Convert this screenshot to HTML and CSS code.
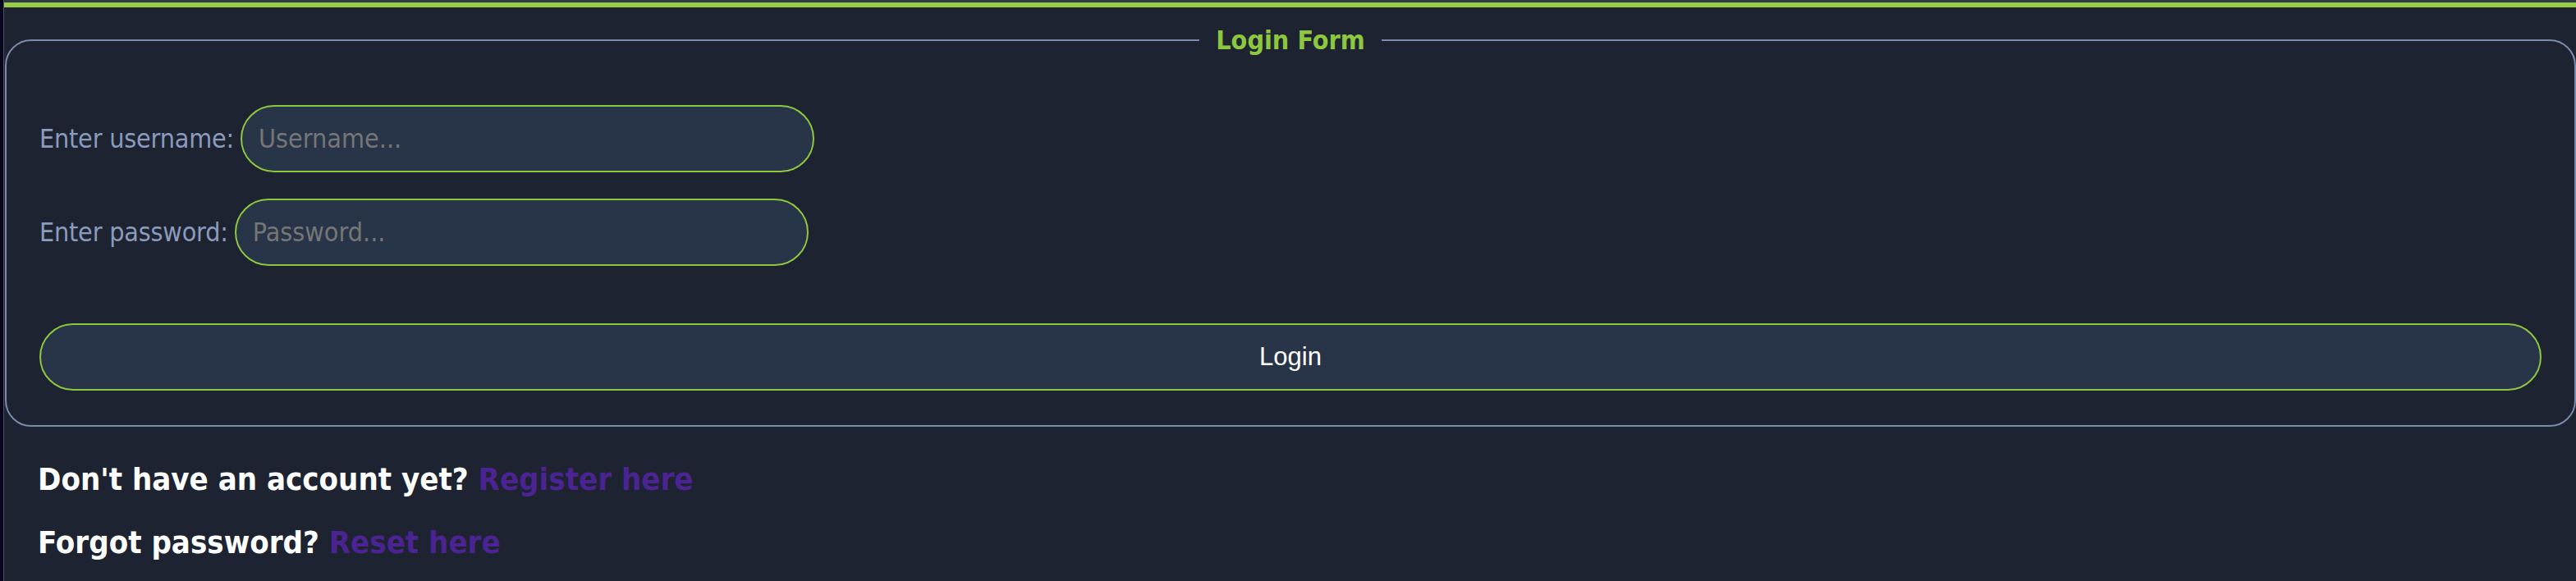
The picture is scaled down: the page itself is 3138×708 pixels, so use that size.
FILE: index.html
```html
<!DOCTYPE html>
<html lang="en">
<head>
<meta charset="utf-8">
<title>Login</title>
<link rel="stylesheet" href="styles.css">
</head>
<body>
<div class="shell">
  <div class="edge"></div>
  <main class="page">
    <div class="topbar"></div>
    <form class="login">
      <fieldset class="box">
        <legend class="title">Login Form</legend>
        <div class="row first">
          <label class="label" for="u">Enter username:</label>
          <input class="field" id="u" type="text" placeholder="Username...">
        </div>
        <div class="row">
          <label class="label" for="p">Enter password:</label>
          <input class="field" id="p" type="password" placeholder="Password...">
        </div>
        <button class="btn" type="button">Login</button>
      </fieldset>
    </form>
    <div class="notes">
      <h3 class="note">Don't have an account yet? <a class="link" href="#">Register here</a></h3>
      <h3 class="note">Forgot password? <a class="link" href="#">Reset here</a></h3>
    </div>
  </main>
</div>
</body>
</html>
```

FILE: styles.css
```css
html, body {
  margin: 0;
  padding: 0;
  height: 100%;
}

body {
  background: #1d2330;
  font-family: "DejaVu Sans Condensed", "DejaVu Sans", sans-serif;
  font-stretch: condensed;
  overflow: hidden;
}

.shell {
  display: flex;
  min-height: 708px;
}

.edge {
  width: 4px;
  flex: 0 0 4px;
  background: #07061c;
  border-right: 1px solid #4b5262;
}

.page {
  flex: 1;
  min-width: 0;
  border-top: 3px solid #2d3848;
}

.topbar {
  height: 6px;
  background: #9acb47;
}

.login {
  margin: 0;
}

.box {
  margin: 21px 0 0 1px;
  border: 2px solid #7a8aac;
  border-radius: 32px;
  padding: 0 40px 42px 40px;
  min-width: 0;
}

.title {
  margin: 0 auto;
  padding: 0 20px;
  color: #8dc63f;
  font-weight: bold;
  font-size: 32px;
}

.row {
  display: flex;
  align-items: center;
  gap: 8px;
  margin-top: 32px;
}

.row.first {
  margin-top: 60px;
}

.label {
  color: #8a9bbd;
  font-size: 32px;
  letter-spacing: -0.2px;
}

.field {
  box-sizing: border-box;
  width: 699px;
  height: 82px;
  border: 2px solid #8dc63f;
  border-radius: 41px;
  background: #283447;
  padding: 0 20px;
  font-family: inherit;
  font-stretch: condensed;
  font-size: 32px;
  color: #d0d6e0;
  outline: none;
}

.field::placeholder {
  color: #767676;
}

.btn {
  display: block;
  box-sizing: border-box;
  width: 100%;
  height: 82px;
  margin-top: 70px;
  border: 2px solid #8dc63f;
  border-radius: 41px;
  background: #283447;
  color: #ffffff;
  font-family: "Liberation Sans", Arial, sans-serif;
  font-size: 31px;
}

.notes {
  padding: 42px 0 0 41px;
}

.note {
  margin: 0 0 32px 0;
  color: #ffffff;
  font-size: 38px;
  line-height: 45px;
  font-weight: bold;
}

.link {
  color: #4c2393;
  text-decoration: none;
}
```
